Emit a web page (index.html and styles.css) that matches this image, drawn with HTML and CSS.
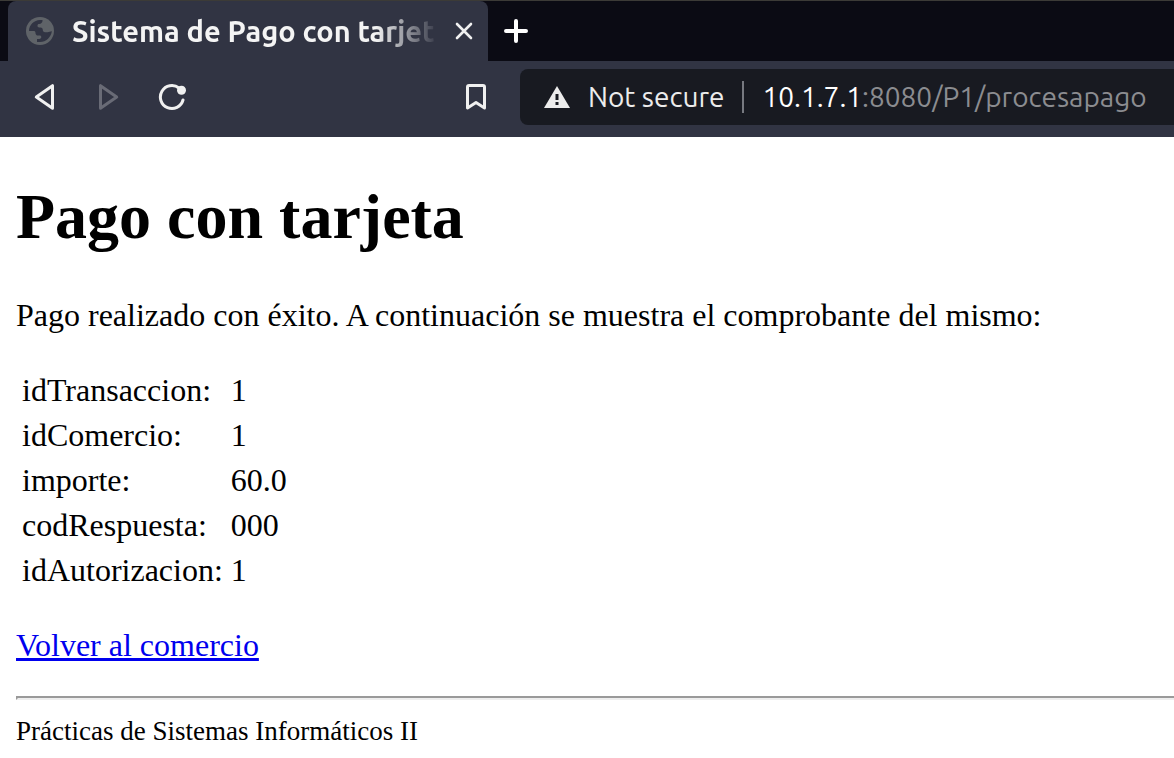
FILE: index.html
```
<!DOCTYPE html>
<html lang="es">
<head>
<meta charset="utf-8">
<title>Sistema de Pago con tarjeta</title>
<link rel="stylesheet" href="styles.css">
</head>
<body>
<header class="browser">
  <div class="tab-strip">
    <div class="tab">
      <svg class="globe" width="28" height="28" viewBox="0 0 28 28" aria-hidden="true">
        <circle cx="14" cy="14" r="14" fill="#5f6368"/>
        <path d="M3 14C3 8 8 3 14 3h2.500v.8c0 1.900-1.500 3.200-3.400 3.200c-1 0-1.600.7-1.600 1.700s.7 1.700 1.700 1.700h1.300c1.600 0 2.300 1.200 2.300 2.600s1 2.200 2.200 2.200h2.500c1.600 0 2.500-1 4.400-1C24.900 20.300 20 25 14 25h-3v-3h2.300c1.300 0 2-.8 2-1.900 0-1-.6-1.600-1.600-1.600h-1.500c-1.800 0-2.700-1.200-2.700-2.600 0-1.300-.7-1.900-1.900-1.900z" fill="#313443"/>
      </svg>
      <span class="tab-title">Sistema de Pago con tarjet</span>
      <button class="icon-button" type="button" aria-label="Close tab">
        <svg width="18" height="18" viewBox="0 0 18 18"><path d="M2 2l14 14M16 2L2 16" fill="none" stroke="#f0f0f0" stroke-width="2.600" stroke-linecap="round"/></svg>
      </button>
    </div>
    <button class="icon-button new-tab" type="button" aria-label="New tab">
      <svg width="24" height="24" viewBox="0 0 24 24"><path d="M12 2v20M2 12h20" fill="none" stroke="#fff" stroke-width="4" stroke-linecap="round"/></svg>
    </button>
  </div>
  <nav class="toolbar">
    <div class="nav-buttons">
      <button class="icon-button" type="button" aria-label="Back">
        <svg width="28" height="28" viewBox="0 0 28 28"><path d="M22.500 2.700v22.600L6.300 14z" fill="none" stroke="#f0f0f0" stroke-width="3" stroke-linejoin="round"/></svg>
      </button>
      <button class="icon-button" type="button" aria-label="Forward" disabled>
        <svg width="28" height="28" viewBox="0 0 28 28"><path d="M6.500 2.700v22.600L22.700 14z" fill="none" stroke="#696b76" stroke-width="3" stroke-linejoin="round"/></svg>
      </button>
      <button class="icon-button" type="button" aria-label="Reload">
        <svg width="28" height="28" viewBox="0 0 28 28"><path d="M21 5A11.500 11.500 0 1 0 25 17" fill="none" stroke="#f0f0f0" stroke-width="3" stroke-linecap="round"/><circle cx="23.500" cy="7.300" r="4.500" fill="#f0f0f0"/></svg>
      </button>
    </div>
    <button class="icon-button" type="button" aria-label="Bookmark">
      <svg width="28" height="28" viewBox="0 0 28 28"><path d="M5.500 4a1.500 1.500 0 0 1 1.500-1.500h14a1.500 1.500 0 0 1 1.500 1.500v21L14 19.500 5.500 25z" fill="none" stroke="#f0f0f0" stroke-width="3" stroke-linejoin="round"/></svg>
    </button>
    <div class="address">
      <svg width="26" height="22" viewBox="0 0 26 22" aria-hidden="true"><path d="M13 0l13 22H0z" fill="#ececec"/><path d="M11.500 8h3v6h-3zM11.500 16h3v3h-3z" fill="#181a21"/></svg>
      <span class="security">Not secure</span>
      <span class="divider"></span>
      <span class="url"><span class="host">10.1.7.1</span>:8080/P1/procesapago</span>
    </div>
  </nav>
</header>
<main class="page">
  <h1 class="heading">Pago con tarjeta</h1>
  <p class="text">Pago realizado con éxito. A continuación se muestra el comprobante del mismo:</p>
  <table class="receipt">
    <tbody>
      <tr><td>idTransaccion:</td><td>1</td></tr>
      <tr><td>idComercio:</td><td>1</td></tr>
      <tr><td>importe:</td><td>60.0</td></tr>
      <tr><td>codRespuesta:</td><td>000</td></tr>
      <tr><td>idAutorizacion:</td><td>1</td></tr>
    </tbody>
  </table>
  <p class="text"><a class="link" href="#">Volver al comercio</a></p>
  <hr class="rule">
  <footer class="footer">Prácticas de Sistemas Informáticos II</footer>
</main>
</body>
</html>
```
FILE: styles.css
```
body {
  margin: 0;
  background: #fff;
  color: #000;
  font-family: "Liberation Serif", serif;
  font-size: 32px;
}

.browser {
  font-family: Ubuntu, "Noto Sans", sans-serif;
  font-size: 28px;
  line-height: 32px;
  background: #313443;
  color: #ececec;
}

.tab-strip {
  display: flex;
  border-top: 1px solid #3c3b37;
  height: 60px;
  padding-left: 8px;
  background: #0b0b14;
}

.tab {
  display: flex;
  align-items: center;
  box-sizing: border-box;
  width: 480px;
  padding: 0 15px 0 18px;
  border-radius: 8px 8px 0 0;
  background: #313443;
}

.globe {
  flex: none;
  margin-right: 18px;
}

.tab-title {
  flex: 1;
  min-width: 0;
  margin-right: 16px;
  overflow: hidden;
  white-space: nowrap;
  font-size: 29px;
  font-weight: 600;
  line-height: 36px;
  color: #f4f4f4;
  mask-image: linear-gradient(to right, #000 calc(100% - 64px), transparent);
}

.icon-button {
  display: flex;
  align-items: center;
  flex: none;
  padding: 0;
  border: 0;
  background: none;
}

.new-tab {
  margin-left: 16px;
}

.toolbar {
  display: flex;
  align-items: center;
  height: 76px;
  box-sizing: border-box;
  padding: 8px 0 12px 30px;
}

.nav-buttons {
  display: flex;
  flex: none;
  gap: 36px;
  margin-right: 276px;
}

.address {
  display: flex;
  align-items: center;
  flex: 1;
  min-width: 0;
  align-self: stretch;
  margin-left: 30px;
  padding-left: 24px;
  border-radius: 8px 0 0 8px;
  background: #181a21;
  white-space: nowrap;
}

.security {
  margin-left: 18px;
}

.divider {
  width: 2px;
  height: 32px;
  margin: 0 18px;
  background: #777980;
}

.url {
  color: #8b8c90;
}

.host {
  color: #fff;
}

.page {
  display: flow-root;
  padding-left: 16px;
}

.heading {
  margin: 43px 0;
  font-size: 64px;
}

.text {
  margin: 32px 0;
}

.receipt {
  border-spacing: 4px;
}

.receipt td {
  padding: 2px;
}

.link {
  color: #0000ee;
}

.rule {
  margin: 16px 0;
  border: 2px solid;
  border-color: #9a9a9a #eee #eee #9a9a9a;
  border-right: 0;
}

.footer {
  font-size: 27px;
}
```
